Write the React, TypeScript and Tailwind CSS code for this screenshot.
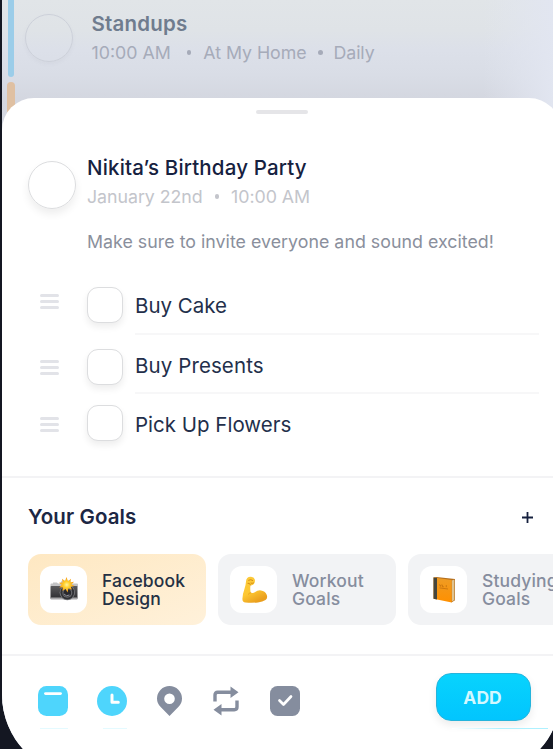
import type { ReactNode } from "react";

const INTER = "font-['Inter','Liberation_Sans',sans-serif]";

function Dot({ className }: { className: string }) {
  return <span className={`block size-[4.500px] shrink-0 rounded-full ${className}`} />;
}

function DragHandle({ className }: { className: string }) {
  return (
    <div className={`flex w-[19px] shrink-0 flex-col gap-[3px] ${className}`}>
      <span className="h-[3px] rounded-full bg-[#e2e3e8]" />
      <span className="h-[3px] rounded-full bg-[#e2e3e8]" />
      <span className="h-[3px] rounded-full bg-[#e2e3e8]" />
    </div>
  );
}

type TaskProps = { label: string; handle: string; box: string; text: string; last?: boolean };

function Task({ label, handle, box, text, last }: TaskProps) {
  return (
    <div className="flex h-[59.5px] items-start pl-[38px]">
      <DragHandle className={handle} />
      <div
        className={`ml-[28px] h-[36px] w-[36px] shrink-0 rounded-[11px] border-[1.5px] border-[#dcdddf] bg-white shadow-[0_4px_7px_rgba(0,0,0,0.07)] ${box}`}
      />
      <div className={`ml-[12px] h-[59.5px] w-[404px] shrink-0 ${last ? "" : "border-b-2 border-[#f7f7f8]"}`}>
        <div className={`pt-[18px] text-[20.5px] leading-[25px] whitespace-nowrap text-[#232f4b] ${text}`}>{label}</div>
      </div>
    </div>
  );
}

function CameraIcon() {
  return (
    <svg width="30" height="30" viewBox="0 0 30 30">
      <defs>
        <linearGradient id="body" x1="0" y1="0" x2="0" y2="1">
          <stop offset="0" stopColor="#5a5a5c" />
          <stop offset="1" stopColor="#2d2d30" />
        </linearGradient>
        <radialGradient id="flash">
          <stop offset="0" stopColor="#fff3a0" />
          <stop offset=".4" stopColor="#ffd02b" />
          <stop offset="1" stopColor="#f5961c" />
        </radialGradient>
      </defs>
      <path d="M4 7.500h4l1 1h2l2-3h8l1.500 3H28q1 0 1 1V12H1.500V9.500q0-1 1-1H4z" fill="#c3c3c4" />
      <rect x="1.500" y="11" width="27" height="13" rx="1" fill="url(#body)" />
      <rect x="1.500" y="22.600" width="27" height="2" rx=".8" fill="#a8a8aa" />
      <circle cx="18.300" cy="17.500" r="7.700" fill="#7d7e81" />
      <circle cx="18.300" cy="17.500" r="6.900" fill="#313236" />
      <circle cx="18.300" cy="17.800" r="5" fill="#68696d" />
      <circle cx="18.300" cy="17.800" r="3.800" fill="#29292d" />
      <path d="M15 19q2 3 5.500 1" stroke="#8d8e98" strokeWidth="1" fill="none" />
      <path
        d="M17.500 2l1.500 4.200 3-2.500-.5 3.500 3.500-.5-2.500 2.800 3 1.500-3.700.8 1.200 3-3.500-1.500-1 4.200-2-3.800-3 2.300.2-3.800-3.500.2 2.500-2.700-2.700-2 3.700-.3-.7-3.700 3 2.200z"
        fill="url(#flash)"
      />
    </svg>
  );
}

function BicepsIcon() {
  return (
    <svg width="30" height="30" viewBox="0 0 30 30">
      <defs>
        <linearGradient id="skin" x1="0" y1="0" x2=".5" y2="1">
          <stop offset="0" stopColor="#fbc93a" />
          <stop offset=".6" stopColor="#fdc833" />
          <stop offset="1" stopColor="#ea9f1d" />
        </linearGradient>
      </defs>
      <path
        d="M8.300 3Q9.500 1.600 12 1.700q3 .1 3.700 2.600.8 2.800-.8 4.600-1.300 1.400-3.300 1.200-.8 3.700.2 7.600 2.400 1 4.400-.7 2.400-2 5.800-1.600 4 .5 5.700 4.300 1.300 3.600-1.200 5.400-2.800 1.900-7.500 2.300-6 .6-12.500.1-3.200-.3-3.100-3.700.1-4.500 1.900-9.300 1.500-4.300 1.700-7.900.1-2.300 1.300-3.600z"
        fill="url(#skin)"
      />
      <path d="M9.600 5.200q2.300-1.300 4.100.2M9 8.200q1.500-.8 2.600 1.900M12 8.200q1.200.6 2.500-.2" stroke="#cf8412" strokeWidth=".9" strokeLinecap="round" fill="none" />
      <path d="M11.800 17.700q-1.300.1-2.400 1.400" stroke="#e09a1b" strokeWidth=".8" strokeLinecap="round" fill="none" />
    </svg>
  );
}

function BookIcon() {
  return (
    <svg width="30" height="30" viewBox="0 0 30 30">
      <defs>
        <linearGradient id="cover" x1="0" y1="0" x2="0" y2="1">
          <stop offset="0" stopColor="#ee9c25" />
          <stop offset="1" stopColor="#ff9000" />
        </linearGradient>
      </defs>
      <path d="M4.500 2.600L7.500 2 26 3.900v21.300L22.500 27.500z" fill="#b5701f" />
      <path d="M22.700 5.600l2.700-1.100v20.400l-2.700 1.700z" fill="#dfc391" />
      <path d="M4.500 2.600l18.200 2.500V27.600L4.500 23.800z" fill="url(#cover)" />
      <path d="M4.500 2.600l3.500.5v21.400l-3.500-.7z" fill="#45453c" />
      <path d="M10.500 9.400l.9 2 .9-1.800M13.400 9.800v1.900h1.400M17.300 10.100v2.100M10.500 12.900l8.500 1.100" stroke="#bd6c0c" strokeWidth=".7" fill="none" />
    </svg>
  );
}

type GoalProps = { icon: ReactNode; first: string; second: string; card: string };

function Goal({ icon, first, second, card }: GoalProps) {
  return (
    <div className={`flex h-[71px] w-[178px] shrink-0 items-center rounded-[13px] pl-[12px] ${card}`}>
      <div className="flex size-[47px] shrink-0 items-center justify-center rounded-[12px] bg-white">{icon}</div>
      <div className="ml-[15px] text-[17.500px] leading-[18px] font-medium tracking-[0.150px] whitespace-nowrap">
        {first}
        <br />
        {second}
      </div>
    </div>
  );
}

export default function App() {
  return (
    <div className={`h-[749px] w-full overflow-hidden bg-[#141722] ${INTER}`}>
      <div className="ml-[2px] h-[775px] w-[559px] overflow-hidden rounded-b-[80px] bg-[linear-gradient(90deg,rgba(226,230,241,0)_86%,#e2e6f1_99%),linear-gradient(180deg,#e1e5e8_0px,#dfe3e7_30px,#dce0e9_50px,#d9dde6_75px,#d4d7e0_98px,#d5d8e1_120px)]">
        {/* Dimmed schedule behind the sheet */}
        <header className="flex h-[125px]">
          <div className="ml-[5px] flex w-[8px] shrink-0 flex-col items-center gap-[5px]">
            <span className="h-[77px] w-[6.500px] shrink-0 rounded-b-full bg-[#9bcde9]" />
            <span className="h-[42px] w-[8px] shrink-0 rounded-t-full bg-[#dfc0a2]" />
          </div>
          <div className="mt-[14px] ml-[10px] size-[48px] shrink-0 rounded-full border-[1.5px] border-[#cdd1da] shadow-[0_2px_4px_rgba(90,100,120,0.05)]" />
          <div className="ml-[18.500px] whitespace-nowrap">
            <div className="mt-[11px] text-[20.500px] leading-[26px] font-semibold tracking-[0.2px] text-[#6f7c8e]">Standups</div>
            <div className="mt-[3px] flex items-center text-[17.800px] leading-[25px] text-[#a6abb9]">
              <span>10:00 AM</span>
              <Dot className="mr-[12px] ml-[16px] bg-[#a6abb9]" />
              <span className="tracking-[-0.050px]">At My Home</span>
              <Dot className="mr-[11px] ml-[11.500px] bg-[#a6abb9]" />
              <span className="tracking-[-0.1px]">Daily</span>
            </div>
          </div>
        </header>

        <main className="relative -mt-[27px] flex h-[677px] flex-col rounded-t-[32px] bg-white">
          <div className="mt-[12px] ml-[254px] h-[4px] w-[52px] shrink-0 rounded-full bg-[#e5e5e8]" />

          <section className="flex h-[161px] shrink-0 pl-[26px]">
            <div className="mt-[47px] size-[48px] shrink-0 rounded-full border-[1.5px] border-[#dcdddf] shadow-[0_5px_8px_rgba(0,0,0,0.07)]" />
            <div className="ml-[11px] whitespace-nowrap">
              <h1 className="mt-[41px] text-[20.500px] leading-[26px] font-medium tracking-[0.170px] text-[#16213f]">Nikita’s Birthday Party</h1>
              <div className="mt-[3px] flex items-center text-[17.800px] leading-[25px] text-[#c3c5cb]">
                <span className="tracking-[-0.050px]">January 22nd</span>
                <Dot className="mx-[12px] bg-[#c3c5cb]" />
                <span className="tracking-[-0.050px]">10:00 AM</span>
              </div>
              <p className="mt-[20px] text-[17.800px] leading-[25px] tracking-[0.020px] text-[#8a8f9c]">Make sure to invite everyone and sound excited!</p>
            </div>
          </section>

          <section className="h-[201px] shrink-0">
            <Task label="Buy Cake" handle="mt-[19px]" box="mt-[12px]" text="" />
            <Task label="Buy Presents" handle="mt-[25px]" box="mt-[14px]" text="tracking-[0.1px]" />
            <Task label="Pick Up Flowers" handle="mt-[23px]" box="mt-[11px]" text="" last />
          </section>

          <section className="h-[180px] shrink-0 border-y-2 border-[#f3f3f5] pl-[26px]">
            <div className="flex h-[76px] items-center justify-between pr-[28px]">
              <h2 className="mt-[2px] text-[20.500px] leading-[26px] font-semibold tracking-[0.1px] text-[#1c2744]">Your Goals</h2>
              <svg className="mt-[3px]" width="11" height="11" viewBox="0 0 11 11">
                <path d="M5.500 0v11M0 5.500h11" stroke="#15203e" strokeWidth="1.800" />
              </svg>
            </div>
            <div className="flex gap-[12px]">
              <Goal icon={<CameraIcon />} first="Facebook" second="Design" card="bg-linear-to-br from-[#fee8c2] to-[#fff1da] text-[#243044]" />
              <Goal icon={<BicepsIcon />} first="Workout" second="Goals" card="bg-[#f2f3f5] text-[#868d9e]" />
              <Goal icon={<BookIcon />} first="Studying" second="Goals" card="bg-[#f2f3f5] text-[#868d9e]" />
            </div>
          </section>

          <footer className="flex items-start pl-[36px]">
            <svg className="mt-[30px]" width="30" height="30" viewBox="0 0 30 30">
              <rect width="30" height="30" rx="8.500" fill="#4ed5fc" />
              <path d="M7.500 7.600h15" stroke="#fff" strokeWidth="2.800" strokeLinecap="round" />
            </svg>
            <svg className="mt-[30px] ml-[29px]" width="30" height="30" viewBox="0 0 30 30">
              <circle cx="15" cy="15" r="15" fill="#4ed5fc" />
              <path d="M15 9v7.300h6.300" stroke="#fff" strokeWidth="3" strokeLinecap="round" strokeLinejoin="round" fill="none" />
            </svg>
            <svg className="mt-[30px] ml-[29.500px]" width="25" height="30" viewBox="0 0 25 30">
              <path fillRule="evenodd" d="M12.500 0A12.500 12.500 0 0 1 25 12.500q0 5-3.700 8.500L12.500 30 3.700 21Q0 17.500 0 12.500A12.500 12.500 0 0 1 12.500 0zm0 7.500a5.300 5.300 0 1 0 0 10.600 5.300 5.300 0 0 0 0-10.600z" fill="#858d9e" />
            </svg>
            <svg className="mt-[30px] ml-[31.500px]" width="26" height="30" viewBox="0 0 26 30">
              <path d="M2 15.500V9q0-2.700 2.700-2.700H18M24 14.500V21q0 2.700-2.700 2.700H8" stroke="#858d9e" strokeWidth="3.400" fill="none" />
              <path d="M17.500.5L25.500 6.300l-8 5.700zM8.500 18L.5 23.700l8 5.800z" fill="#858d9e" />
            </svg>
            <svg className="mt-[30px] ml-[31px]" width="30" height="30" viewBox="0 0 30 30">
              <rect width="30" height="30" rx="7.500" fill="#858d9e" />
              <path d="M9.500 14.500l4 4 7.500-8" stroke="#fff" strokeWidth="2.700" strokeLinecap="round" strokeLinejoin="round" fill="none" />
            </svg>
            <button className="mt-[16.500px] ml-[136px] h-[48px] w-[95px] rounded-[15px] border-[1.5px] border-[#25b4dc] bg-linear-to-b from-[#08d3fd] to-[#02c5fe] pt-[2px] pr-[3px] pl-[1px] text-[17.500px] leading-none font-bold text-[#d3f8ff] shadow-[0_4px_8px_rgba(0,0,0,0.08)]">
              ADD
            </button>
          </footer>
          <div className="mt-[7.500px] flex h-px shrink-0 pl-[38px]">
            <span className="w-[28px] bg-[#e4faff]" />
            <span className="ml-[35px] w-[24px] bg-[#e4faff]" />
            <span className="ml-[325px] w-[96px] bg-linear-to-r from-white via-[#aef1ff] to-[#aef1ff]" />
          </div>
        </main>
      </div>
    </div>
  );
}
